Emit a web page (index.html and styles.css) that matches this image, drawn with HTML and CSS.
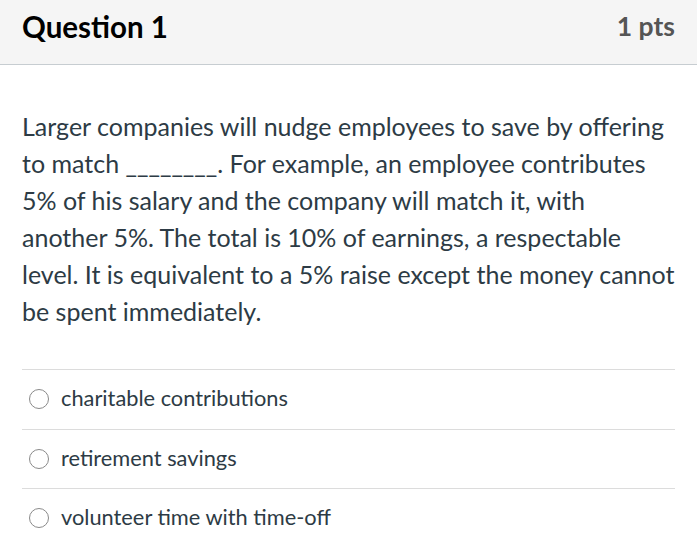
FILE: index.html
```html
<!DOCTYPE html>
<html>
<head>
<meta charset="utf-8">
<link rel="stylesheet" href="styles.css">
</head>
<body>
<div class="question">
  <div class="header">
    <h2 class="title">Question 1</h2>
    <span class="pts">1 pts</span>
  </div>
  <div class="content">
    <p class="text">Larger companies will nudge employees to save by offering to match ________. For example, an employee contributes 5% of his salary and the company will match it, with another 5%. The total is 10% of earnings, a respectable level. It is equivalent to a 5% raise except the money cannot be spent immediately.</p>
    <div class="answers">
      <label class="answer"><span class="radio"></span><span class="label">charitable contributions</span></label>
      <label class="answer"><span class="radio"></span><span class="label">retirement savings</span></label>
      <label class="answer"><span class="radio"></span><span class="label">volunteer time with time-off</span></label>
    </div>
  </div>
</div>
</body>
</html>
```

FILE: styles.css
```css
html, body {
  margin: 0;
  padding: 0;
  background: #fff;
}
body {
  font-family: Lato, "Noto Sans", sans-serif;
  color: #2d3b45;
}
.header {
  background: #f5f5f5;
  border-bottom: 1px solid #c7cdd1;
  height: 65px;
  box-sizing: border-box;
  padding: 0 22px;
  display: flex;
  align-items: center;
  justify-content: space-between;
}
.title {
  margin: 0;
  font-size: 29.5px;
  font-weight: 700;
  color: #000;
  margin-top: -12px;
}
.pts {
  font-size: 26.5px;
  font-weight: 700;
  color: #555;
  margin-top: -12px;
}
.content {
  padding: 0 22px;
}
.text {
  margin: 0;
  padding-top: 43px;
  font-size: 25px;
  line-height: 37px;
  color: #2d3b45;
}
.answers {
  margin-top: 39px;
}
.answer {
  display: flex;
  align-items: center;
  border-top: 1px solid #dcdcdc;
  height: 59.5px;
  box-sizing: border-box;
  padding-left: 7px;
}
.radio {
  width: 20px;
  height: 20px;
  border: 1px solid #8a8a8a;
  border-radius: 50%;
  box-sizing: border-box;
  margin-right: 12px;
}
.label {
  font-size: 21.8px;
  color: #2d3b45;
  margin-top: -3px;
}
```
